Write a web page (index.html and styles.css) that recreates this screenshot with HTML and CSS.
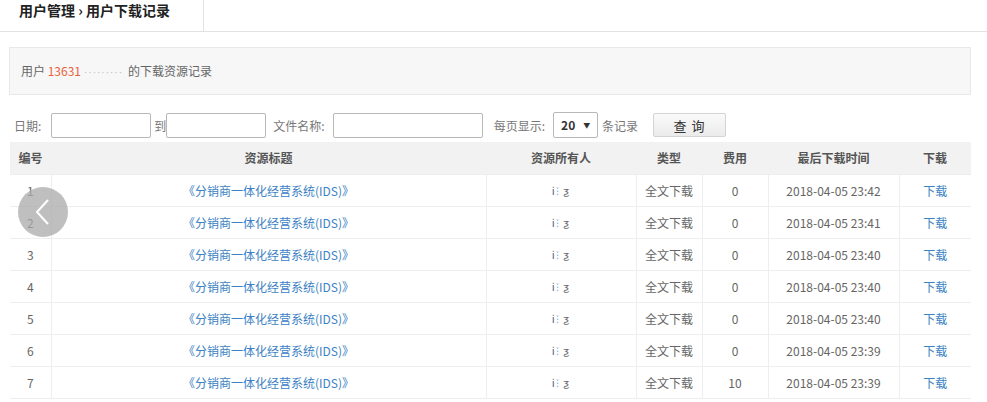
FILE: index.html
```html
<!DOCTYPE html>
<html lang="zh-CN">
<head>
  <meta charset="UTF-8" />
  <title>用户下载记录</title>
  <link rel="stylesheet" href="styles.css">
</head>
<body>

  <div class="topbar">
    <div class="crumb">用户管理 <span class="sep">›</span> 用户下载记录</div>
  </div>

  <div class="main">
    <div class="notice">
      用户 <span class="uid">13631</span><span class="mask">·········</span>的下载资源记录
    </div>

    <div class="filter">
      <label class="date-l">日期:</label>
      <input type="text" class="date">
      <label class="to">到</label>
      <input type="text" class="date">
      <label class="fname">文件名称:</label>
      <input type="text" class="name">
      <label class="per">每页显示:</label>
      <div class="select">20<span class="arrow">▼</span></div>
      <label>条记录</label>
      <button class="query">查 询</button>
    </div>

    <table class="list">
      <thead>
        <tr>
          <th class="c-no">编号</th>
          <th class="c-title">资源标题</th>
          <th class="c-owner">资源所有人</th>
          <th class="c-type">类型</th>
          <th class="c-fee">费用</th>
          <th class="c-time">最后下载时间</th>
          <th class="c-dl">下载</th>
        </tr>
      </thead>
      <tbody id="rows"></tbody>
    </table>

    <div class="prev-btn">
      <svg width="18" height="30" viewBox="0 0 18 30"><path d="M14 3 L3 15 L14 27" fill="none" stroke="#fff" stroke-width="2"/></svg>
    </div>
  </div>

  <script>
    // download log data
    const records = [
      [1, 0, "2018-04-05 23:42"],
      [2, 0, "2018-04-05 23:41"],
      [3, 0, "2018-04-05 23:40"],
      [4, 0, "2018-04-05 23:40"],
      [5, 0, "2018-04-05 23:40"],
      [6, 0, "2018-04-05 23:39"],
      [7, 10, "2018-04-05 23:39"]
    ];

    const tbody = document.getElementById("rows");
    records.forEach(r => {
      const tr = document.createElement("tr");
      tr.innerHTML =
        `<td>${r[0]}</td>` +
        `<td><a href="#">《分销商一体化经营系统(IDS)》</a></td>` +
        `<td class="owner">i<span class="dots">⁝</span> ƺ</td>` +
        `<td>全文下载</td>` +
        `<td>${r[1]}</td>` +
        `<td>${r[2]}</td>` +
        `<td><a href="#">下载</a></td>`;
      tbody.appendChild(tr);
    });
  </script>
</body>
</html>
```

FILE: styles.css
```css
* {
  box-sizing: border-box;
  margin: 0;
  padding: 0;
}

body {
  font-family: "Noto Sans CJK SC", "Open Sans", sans-serif;
  font-size: 12px;
  color: #666;
  background: #fff;
}

.topbar {
  height: 32px;
  border-bottom: 1px solid #e2e2e2;
}

.crumb {
  width: 204px;
  height: 31px;
  border-right: 1px solid #e2e2e2;
  padding-left: 19px;
  line-height: 21px;
  font-size: 14px;
  font-weight: bold;
  color: #222;
}

/* Notice */
.main {
  position: relative;
  padding: 15px 16px 0 9px;
}

.notice {
  height: 48px;
  background: #f7f7f7;
  border: 1px solid #e8e8e8;
  padding-left: 11px;
  line-height: 46px;
  color: #666;
}

.notice .uid {
  color: #e8603c;
}

.notice .mask {
  font-family: "Liberation Sans", sans-serif;
  font-size: 10px;
  letter-spacing: 1px;
  color: #bbb;
  margin: 0 5px 0 3px;
}

/* Filter row */
.filter {
  display: flex;
  align-items: center;
  height: 26px;
  margin-top: 17px;
  padding-left: 5px;
}

.filter label {
  color: #777;
  margin-right: 4px;
}

.filter label.date-l {
  margin-right: 10px;
}

.filter label.to {
  margin: 0 0 0 3px;
}

.filter label.fname {
  margin-left: 7px;
  margin-right: 8px;
}

.filter label.per {
  margin-left: 11px;
  margin-right: 8px;
}

.filter input {
  height: 25px;
  border: 1px solid #b8b8b8;
  border-radius: 2px;
}

.filter input.date {
  width: 100px;
}

.filter input.name {
  width: 150px;
}

.select {
  width: 45px;
  height: 26px;
  border: 1px solid #b8b8b8;
  border-radius: 2px;
  font-weight: bold;
  color: #333;
  line-height: 24px;
  padding-left: 7px;
  margin-right: 4px;
}

.select .arrow {
  font-size: 7px;
  font-weight: normal;
  margin-left: 8px;
  vertical-align: 2px;
}

.query {
  width: 73px;
  height: 24px;
  margin-left: 11px;
  border: 1px solid #d4d4d4;
  border-radius: 2px;
  background: linear-gradient(#fafafa, #ebebeb);
  font-family: inherit;
  font-size: 13px;
  color: #333;
  letter-spacing: 1px;
}

/* Table */
.list {
  width: 961px;
  margin-top: 4px;
  margin-left: 1px;
  border-collapse: collapse;
  table-layout: fixed;
}

.list th {
  height: 32px;
  background: #f2f2f2;
  color: #555;
  font-weight: bold;
  text-align: center;
}

.list td {
  height: 32px;
  text-align: center;
  border: 1px solid #eee;
  color: #666;
}

.list tr td:first-child {
  border-left: none;
}

.list tr td:last-child {
  border-right: none;
}

.list a {
  color: #3b82c4;
  text-decoration: none;
}

.c-no { width: 41px; }
.c-title { width: 435px; }
.c-owner { width: 150px; }
.c-type { width: 66px; }
.c-fee { width: 66px; }
.c-time { width: 131px; }
.c-dl { width: 72px; }

.owner {
  font-size: 11px;
  color: #777;
  letter-spacing: 1px;
}

.owner .dots {
  color: #8ab6e0;
}

/* overlay arrow */
.prev-btn {
  position: absolute;
  left: 18px;
  top: 155px;
  width: 50px;
  height: 50px;
  border-radius: 50%;
  background: rgba(170, 170, 170, 0.75);
  display: flex;
  align-items: center;
  justify-content: center;
}
```
